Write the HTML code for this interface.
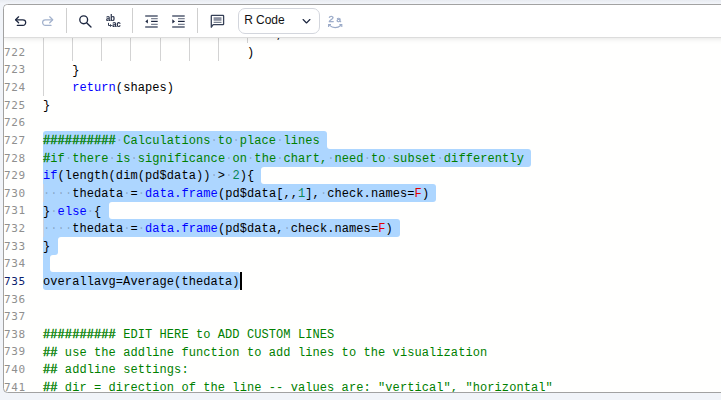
<!DOCTYPE html>
<html lang="en">
<head>
<meta charset="utf-8">
<title>R Code editor</title>
<style>
*{box-sizing:border-box;margin:0;padding:0}
html,body{width:721px;height:400px;overflow:hidden;background:#f1f4f9 linear-gradient(to bottom,#e8ebf1 0,#f3f5fa 4px,#f1f4f9 5px) no-repeat}
body{position:relative;font-family:"Liberation Sans",sans-serif}
.frame{position:absolute;left:3px;top:4px;width:760px;height:389px;border:1px solid #a2a2a2;border-radius:4.5px;background:#fffffe;overflow:hidden}
.ed{position:absolute;left:-4px;top:-5px;width:760px;height:400px;}
.toolbar{position:absolute;left:0;top:0;width:760px;height:33px;background:#fff;border-bottom:1px solid #dcdcdc;box-shadow:0 1px 5px rgba(0,0,0,.10)}
.tb{position:absolute;left:-4px;top:-5px;width:760px;height:40px}
.sep{position:absolute;top:8px;width:1px;height:25px;background:#cfcfcf}
.ico{position:absolute;overflow:visible}
.select{position:absolute;left:238px;top:8px;width:82px;height:26px;border:1px solid #d3d6dd;border-radius:7px;background:#fff;font-size:12px;line-height:23px;color:#111;padding-left:5.2px;letter-spacing:-0.05px}
.cl,.ln{position:absolute;font-family:"Liberation Mono",monospace;font-size:12.0px;line-height:17.635px;height:17.635px;white-space:pre;color:#000}
.cl{left:43.0px;letter-spacing:0.082px}
.cl{padding-top:1.9px}
.ln{padding-top:0.6px;font-family:"DejaVu Sans Mono","Liberation Mono",monospace;font-size:11px;letter-spacing:0.66px}
.ln{left:1.9px;width:24px;text-align:right;color:#8f8f8f}
.ln.act{color:#0b216f}
.k{color:#0000ff}.c{color:#008000}.n{color:#098658}.r{color:#e00000}
.cl b{font-weight:normal;-webkit-text-stroke:0.4px #008000}
.cl s{text-decoration:none;color:rgba(51,51,51,.28)}
.sel{position:absolute;left:43px;height:17.635px;background:#add6ff}
.cc{position:absolute;width:3px;height:3px;background:#add6ff}
.cc i{display:block;width:3px;height:3px;background:#fffffe}
.g{position:absolute;width:1px;height:17.635px;background:#d3d3d3}
.g.gs{background:#cdd2de}
.cur{position:absolute;width:2px;height:17.635px;background:#000}
</style>
</head>
<body>
<div class="frame">
<div class="ed">
<div class="sel" style="top:131.27px;width:284.04px;border-radius:3px 3px 0px 0px"></div>
<div class="cc" style="top:145.91px;left:327.04px"><i style="border-bottom-left-radius:3px"></i></div>
<div class="sel" style="top:148.91px;width:487.96px;border-radius:0px 3px 3px 0px"></div>
<div class="sel" style="top:166.54px;width:218.49px;border-radius:0px 0px 0px 0px"></div>
<div class="cc" style="top:166.54px;left:261.49px"><i style="border-top-left-radius:3px"></i></div>
<div class="cc" style="top:181.18px;left:261.49px"><i style="border-bottom-left-radius:3px"></i></div>
<div class="sel" style="top:184.18px;width:393.28px;border-radius:0px 3px 3px 0px"></div>
<div class="sel" style="top:201.81px;width:65.55px;border-radius:0px 0px 0px 0px"></div>
<div class="cc" style="top:201.81px;left:108.55px"><i style="border-top-left-radius:3px"></i></div>
<div class="cc" style="top:216.44px;left:108.55px"><i style="border-bottom-left-radius:3px"></i></div>
<div class="sel" style="top:219.45px;width:356.87px;border-radius:0px 3px 3px 0px"></div>
<div class="sel" style="top:237.08px;width:14.57px;border-radius:0px 0px 3px 0px"></div>
<div class="cc" style="top:237.08px;left:57.57px"><i style="border-top-left-radius:3px"></i></div>
<div class="sel" style="top:254.72px;width:7.28px;border-radius:0px 0px 0px 0px"></div>
<div class="cc" style="top:254.72px;left:50.28px"><i style="border-top-left-radius:3px"></i></div>
<div class="cc" style="top:269.35px;left:50.28px"><i style="border-bottom-left-radius:3px"></i></div>
<div class="sel" style="top:272.35px;width:196.64px;border-radius:0px 3px 3px 3px"></div>
<div class="g" style="top:25.46px;left:43.00px"></div>
<div class="g" style="top:25.46px;left:72.13px"></div>
<div class="g" style="top:25.46px;left:101.26px"></div>
<div class="g" style="top:25.46px;left:130.40px"></div>
<div class="g" style="top:25.46px;left:159.53px"></div>
<div class="g" style="top:25.46px;left:188.66px"></div>
<div class="g" style="top:25.46px;left:217.79px"></div>
<div class="g" style="top:25.46px;left:246.92px"></div>
<div class="g" style="top:43.09px;left:43.00px"></div>
<div class="g" style="top:43.09px;left:72.13px"></div>
<div class="g" style="top:43.09px;left:101.26px"></div>
<div class="g" style="top:43.09px;left:130.40px"></div>
<div class="g" style="top:43.09px;left:159.53px"></div>
<div class="g" style="top:43.09px;left:188.66px"></div>
<div class="g" style="top:43.09px;left:217.79px"></div>
<div class="g" style="top:60.73px;left:43.00px"></div>
<div class="g" style="top:78.37px;left:43.00px"></div>
<div class="g gs" style="top:184.18px;left:43.00px"></div>
<div class="g gs" style="top:219.45px;left:43.00px"></div>
<div class="cl" style="top:25.46px">                                ,</div>
<div class="ln" style="top:43.09px">722</div>
<div class="cl" style="top:43.09px">                            )</div>
<div class="ln" style="top:60.73px">723</div>
<div class="cl" style="top:60.73px">    }</div>
<div class="ln" style="top:78.37px">724</div>
<div class="cl" style="top:78.37px">    <span class="k">return</span>(shapes)</div>
<div class="ln" style="top:96.00px">725</div>
<div class="cl" style="top:96.00px">}</div>
<div class="ln" style="top:113.64px">726</div>
<div class="ln" style="top:131.27px">727</div>
<div class="cl" style="top:131.27px"><span class="c"><b>##########</b><s>·</s>Calculations<s>·</s>to<s>·</s>place<s>·</s>lines</span></div>
<div class="ln" style="top:148.91px">728</div>
<div class="cl" style="top:148.91px"><span class="c"><b>#</b>if<s>·</s>there<s>·</s>is<s>·</s>significance<s>·</s>on<s>·</s>the<s>·</s>chart,<s>·</s>need<s>·</s>to<s>·</s>subset<s>·</s>differently</span></div>
<div class="ln" style="top:166.54px">729</div>
<div class="cl" style="top:166.54px"><span class="k">if</span>(length(dim(pd$data))<s>·</s>&gt;<s>·</s><span class="n">2</span>){</div>
<div class="ln" style="top:184.18px">730</div>
<div class="cl" style="top:184.18px"><s>·</s><s>·</s><s>·</s><s>·</s>thedata<s>·</s>=<s>·</s><span class="k">data.frame</span>(pd$data[,,<span class="n">1</span>],<s>·</s>check.names=<span class="r">F</span>)</div>
<div class="ln" style="top:201.81px">731</div>
<div class="cl" style="top:201.81px">}<s>·</s><span class="k">else</span><s>·</s>{</div>
<div class="ln" style="top:219.45px">732</div>
<div class="cl" style="top:219.45px"><s>·</s><s>·</s><s>·</s><s>·</s>thedata<s>·</s>=<s>·</s><span class="k">data.frame</span>(pd$data,<s>·</s>check.names=<span class="r">F</span>)</div>
<div class="ln" style="top:237.08px">733</div>
<div class="cl" style="top:237.08px">}</div>
<div class="ln" style="top:254.72px">734</div>
<div class="ln act" style="top:272.35px">735</div>
<div class="cl" style="top:272.35px">overallavg=Average(thedata)</div>
<div class="ln" style="top:289.99px">736</div>
<div class="ln" style="top:307.62px">737</div>
<div class="ln" style="top:325.25px">738</div>
<div class="cl" style="top:325.25px"><span class="c"><b>##########</b> EDIT HERE to ADD CUSTOM LINES</span></div>
<div class="ln" style="top:342.89px">739</div>
<div class="cl" style="top:342.89px"><span class="c"><b>##</b> use the addline function to add lines to the visualization</span></div>
<div class="ln" style="top:360.53px">740</div>
<div class="cl" style="top:360.53px"><span class="c"><b>##</b> addline settings:</span></div>
<div class="ln" style="top:378.16px">741</div>
<div class="cl" style="top:378.16px"><span class="c"><b>##</b> dir = direction of the line -- values are: "vertical", "horizontal"</span></div>
<div class="cur" style="top:272.35px;left:239.64px"></div>
</div>
<div class="toolbar"><div class="tb">
<div class="sep" style="left:66px"></div>
<div class="sep" style="left:132px"></div>
<div class="sep" style="left:197px"></div>
<div class="select">R Code</div>
<svg class="ico" style="left:0;top:0;will-change:transform" width="360" height="40" viewBox="0 0 360 40">
<!-- undo -->
<g fill="none" stroke="#1d2740" stroke-width="1.25" stroke-linecap="round" stroke-linejoin="round">
<path d="M18.6 16.8 L15.6 19.8 L18.6 22.8"/>
<path d="M15.8 19.8 H22.9 a2.8 2.8 0 0 1 0 5.6 H17.3"/>
</g>
<!-- redo -->
<g fill="none" stroke="#a3b2cd" stroke-width="1.25" stroke-linecap="round" stroke-linejoin="round">
<path d="M49.7 16.8 L52.7 19.8 L49.7 22.8"/>
<path d="M52.5 19.8 H45.4 a2.8 2.8 0 0 0 0 5.6 H51"/>
</g>
<!-- search -->
<g fill="none" stroke="#1d2740" stroke-width="1.35" stroke-linecap="round">
<circle cx="83.7" cy="19.8" r="3.9"/>
<path d="M86.6 22.7 L91 27"/>
</g>
<!-- replace -->
<g fill="#1d2740" stroke="#1d2740" stroke-width="0.12" font-family="Liberation Sans, sans-serif" font-weight="bold" font-size="7.6px">
<text transform="translate(106,20.8) scale(1,1.13)">ab</text>
<text transform="translate(112.2,27) scale(1,1.13)">ac</text>
</g>
<path d="M108.5 22.9 V25.5 H111.4 M110.3 24.3 L111.5 25.5 L110.3 26.7" fill="none" stroke="#1d2740" stroke-width="0.9"/>
<!-- outdent -->
<g fill="none" stroke="#7d8494">
<path d="M145.2 16 H157.7 M145.2 27 H157.7" stroke-width="1.8"/>
<path d="M151.1 18.6 H157.7 M151.1 24.4 H157.7" stroke-width="1.2"/>
<path d="M151.1 21.4 H157.7" stroke-width="1.2" stroke="#1d2740"/>
</g>
<path d="M145.3 21.4 L147.9 19.3 V23.5 Z" fill="#1d2740"/>
<!-- indent -->
<g fill="none" stroke="#7d8494">
<path d="M172.2 16 H184.7 M172.2 27 H184.7" stroke-width="1.8"/>
<path d="M178 18.6 H184.7 M178 24.4 H184.7" stroke-width="1.2"/>
<path d="M178 21.4 H184.7" stroke-width="1.2" stroke="#1d2740"/>
</g>
<path d="M175 21.4 L172.3 19.3 V23.5 Z" fill="#1d2740"/>
<!-- comment -->
<path d="M211.3 27.2 V15.9 a0.6 0.6 0 0 1 0.6 -0.6 H223 a0.6 0.6 0 0 1 0.6 0.6 V24 a0.6 0.6 0 0 1 -0.6 0.6 H213.2 Z" fill="#fff" stroke="#364057" stroke-width="1.3" stroke-linejoin="round"/>
<rect x="213.6" y="17.2" width="7.9" height="3.6" fill="#8a90a0"/>
<path d="M213.6 22.3 H221.5" stroke="#4a5368" stroke-width="0.9"/>
<!-- 2a icon -->
<g fill="#9aaac8" stroke="#9aaac8" stroke-width="0.45" font-family="Liberation Sans, sans-serif">
<text x="328.4" y="21.8" font-size="9.6px">2</text>
<text x="336.6" y="21.8" font-size="8px">a</text>
</g>
<g fill="none" stroke="#9aaac8" stroke-width="1.1">
<path d="M329.2 25.2 Q335 30 341.2 25.2"/>
<path d="M328.6 26.9 V24.6 H331 M341.8 26.9 V24.6 H339.4"/>
</g>
<!-- chevron -->
<path d="M303.1 19.5 L306.5 23 L309.9 19.5" fill="none" stroke="#1d2740" stroke-width="1.15" stroke-linecap="round" stroke-linejoin="round"/>
</svg>

</div></div>
</div>
</body>
</html>
